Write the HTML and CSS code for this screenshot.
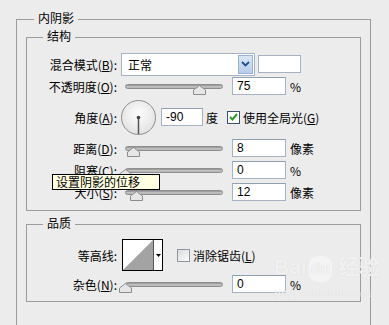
FILE: index.html
```html
<!DOCTYPE html>
<html lang="zh-CN">
<head>
    <meta charset="UTF-8">
    <title>内阴影</title>
    <link rel="stylesheet" href="styles.css">
</head>
<body>

<div class="panel">
    <div class="legend legend-outer">内阴影</div>

    <!-- 结构 -->
    <div class="group group-structure">
        <div class="legend">结构</div>

        <div class="row row-blend">
            <div class="label">混合模式(<u>B</u>):</div>
            <div class="select">
                <span>正常</span>
                <span class="select-btn">
                    <svg width="9" height="6" viewBox="0 0 9 6"><path d="M1 1 L4.5 4.5 L8 1" fill="none" stroke="#1f4f8f" stroke-width="1.8"/></svg>
                </span>
            </div>
            <div class="swatch"></div>
        </div>

        <div class="row row-slider">
            <div class="label">不透明度(<u>O</u>):</div>
            <div class="slider">
                <div class="track"></div>
                <svg class="thumb" style="left: 68px" width="13" height="10" viewBox="0 0 13 10"><polygon points="0.5,9.5 0.5,5 6.5,0.5 12.5,5 12.5,9.5" fill="#e6e6e6" stroke="#8c8c8c"/></svg>
            </div>
            <input class="num" type="text" value="75">
            <span class="unit">%</span>
        </div>

        <div class="row row-angle">
            <div class="label">角度(<u>A</u>):</div>
            <svg class="dial" width="35" height="35" viewBox="0 0 35 35">
                <defs>
                    <radialGradient id="dg" cx="50%" cy="40%" r="60%">
                        <stop offset="0" stop-color="#fdfdfd"/>
                        <stop offset="1" stop-color="#e2e2e2"/>
                    </radialGradient>
                </defs>
                <circle cx="17.5" cy="17.5" r="17" fill="url(#dg)" stroke="#8d8d8d"/>
                <line x1="17.5" y1="17.5" x2="17.5" y2="34" stroke="#555" stroke-width="1.5"/>
                <circle cx="17.5" cy="17.5" r="1.8" fill="#444"/>
            </svg>
            <input class="num num-angle" type="text" value="-90">
            <span class="unit-deg">度</span>
            <span class="check checked">
                <svg width="9" height="8" viewBox="0 0 9 8"><path d="M1 4 L3.5 6.5 L8 1" fill="none" stroke="#2e9a2e" stroke-width="2"/></svg>
            </span>
            <span class="check-text">使用全局光(<u>G</u>)</span>
        </div>

        <div class="row row-slider row-small">
            <div class="label">距离(<u>D</u>):</div>
            <div class="slider">
                <div class="track"></div>
                <svg class="thumb" style="left: 2px" width="13" height="10" viewBox="0 0 13 10"><polygon points="0.5,9.5 0.5,5 6.5,0.5 12.5,5 12.5,9.5" fill="#e6e6e6" stroke="#8c8c8c"/></svg>
            </div>
            <input class="num" type="text" value="8">
            <span class="unit">像素</span>
        </div>

        <div class="row row-slider row-small">
            <div class="label">阻塞(<u>C</u>):</div>
            <div class="slider">
                <div class="track"></div>
                <svg class="thumb" style="left: -6px" width="13" height="10" viewBox="0 0 13 10"><polygon points="0.5,9.5 0.5,5 6.5,0.5 12.5,5 12.5,9.5" fill="#e6e6e6" stroke="#8c8c8c"/></svg>
            </div>
            <input class="num" type="text" value="0">
            <span class="unit">%</span>
        </div>

        <div class="row row-slider row-small">
            <div class="label">大小(<u>S</u>):</div>
            <div class="slider">
                <div class="track"></div>
                <svg class="thumb" style="left: 5px" width="13" height="10" viewBox="0 0 13 10"><polygon points="0.5,9.5 0.5,5 6.5,0.5 12.5,5 12.5,9.5" fill="#e6e6e6" stroke="#8c8c8c"/></svg>
            </div>
            <input class="num" type="text" value="12">
            <span class="unit">像素</span>
        </div>
    </div>

    <!-- 品质 -->
    <div class="group group-quality">
        <div class="legend">品质</div>

        <div class="row row-contour">
            <div class="label">等高线:</div>
            <div class="contour">
                <svg class="contour-curve" width="30" height="30" viewBox="0 0 30 30">
                    <rect width="30" height="30" fill="#fff"/>
                    <polygon points="0,30 30,0 30,30" fill="#a3a3a3"/>
                </svg>
                <span class="contour-btn">
                    <svg width="5" height="3" viewBox="0 0 5 3"><polygon points="0,0 5,0 2.5,3" fill="#000"/></svg>
                </span>
            </div>
            <span class="check"></span>
            <span class="check-text">消除锯齿(<u>L</u>)</span>
        </div>

        <div class="row row-slider">
            <div class="label">杂色(<u>N</u>):</div>
            <div class="slider">
                <div class="track"></div>
                <svg class="thumb" style="left: -6px" width="13" height="10" viewBox="0 0 13 10"><polygon points="0.5,9.5 0.5,5 6.5,0.5 12.5,5 12.5,9.5" fill="#e6e6e6" stroke="#8c8c8c"/></svg>
            </div>
            <input class="num" type="text" value="0">
            <span class="unit">%</span>
        </div>
    </div>
</div>

<!-- tooltip over the sliders -->
<div class="tooltip">设置阴影的位移</div>

<!-- watermark -->
<div class="watermark">
    <div class="wm-logo">Bai<span class="wm-du">du</span> 经验</div>
    <div class="wm-url">jingyan.baidu.com</div>
</div>

</body>
</html>
```

FILE: styles.css
```css
body {
    margin: 0;
    padding: 0;
    background: #ececec;
    color: #000;
    font-family: "Noto Sans CJK SC", "Liberation Sans", sans-serif;
    font-size: 12px;
    height: 325px;
    overflow: hidden;
}

u {
    text-decoration: underline;
    text-underline-offset: 1px;
}

.panel {
    box-sizing: border-box;
    margin: 19px 0 0 16px;
    width: 355px;
    height: 306px;
    border: 1px solid #9c9c9c;
    border-bottom: none;
}

.legend {
    width: max-content;
    height: 16px;
    line-height: 16px;
    margin: -10px 0 0 16px;
    padding: 0 4px;
    background: #ececec;
}

.legend-outer {
    margin-left: 17px;
}

.group {
    box-sizing: border-box;
    width: 335px;
    margin-left: 9px;
    border: 1px solid #9c9c9c;
}

.group-structure {
    margin-top: 11px;
    height: 174px;
}

.group-quality {
    margin-top: 13px;
    height: 78px;
}

.row {
    display: flex;
    align-items: center;
}

.label {
    flex: none;
    width: 90px;
    text-align: right;
    white-space: nowrap;
}

/* blend mode */
.row-blend {
    margin-top: 8px;
    height: 24px;
}

.select {
    box-sizing: border-box;
    display: flex;
    align-items: center;
    justify-content: space-between;
    width: 134px;
    height: 23px;
    margin-left: 4px;
    padding: 1px 1px 1px 6px;
    background: #fff;
    border: 1px solid #a6b3c4;
}

.select-btn {
    box-sizing: border-box;
    display: flex;
    align-items: center;
    justify-content: center;
    width: 15px;
    height: 19px;
    background: linear-gradient(#dbe7f6, #b7cdea);
    border: 1px solid #98b3d8;
}

.swatch {
    box-sizing: border-box;
    width: 43px;
    height: 18px;
    margin-left: 3px;
    background: #fff;
    border: 1px solid #a6b3c4;
}

/* sliders */
.row-slider {
    height: 20px;
}

.row-small {
    height: 22px;
}

.row-angle + .row-small {
    margin-top: 3px;
}

.slider {
    position: relative;
    flex: none;
    width: 98px;
    height: 11px;
    margin: 7px 0 0 8px;
}

.track {
    box-sizing: border-box;
    height: 5px;
    border-radius: 3px;
    background: linear-gradient(#8f8f8f, #c8c8c8 60%, #b0b0b0);
    border: 1px solid #8d8d8d;
}

.thumb {
    position: absolute;
    top: 1px;
}

.num {
    box-sizing: border-box;
    width: 54px;
    height: 18px;
    margin: 0 0 0 9px;
    padding: 0 4px;
    background: #fff;
    border: 1px solid #a6b3c4;
    border-top-color: #8fa0b5;
    font-family: "Liberation Sans", sans-serif;
    font-size: 12px;
    color: #000;
    outline: none;
}

.unit {
    margin-left: 4px;
    white-space: nowrap;
}

/* angle */
.row-angle {
    margin-top: 4px;
    height: 34px;
}

.dial {
    flex: none;
    margin-left: 4px;
}

.num-angle {
    width: 42px;
    margin-left: 5px;
}

.unit-deg {
    margin-left: 3px;
}

.check {
    box-sizing: border-box;
    display: flex;
    align-items: center;
    justify-content: center;
    flex: none;
    width: 13px;
    height: 13px;
    margin-left: 14px;
    background: linear-gradient(135deg, #dcdcdc, #fbfbfb);
    border: 1px solid #8c97a3;
}

.check.checked {
    margin-left: 9px;
    background: #fff;
    border-color: #39506b;
}

.check-text {
    margin-left: 3px;
    white-space: nowrap;
}

/* contour */
.row-contour {
    margin-top: 8px;
    height: 32px;
}

.contour {
    box-sizing: border-box;
    display: flex;
    width: 41px;
    height: 32px;
    margin-left: 5px;
    border: 1px solid #000;
    background: #fff;
}

.contour-curve {
    display: block;
    border-right: 1px solid #555;
}

.contour-btn {
    display: flex;
    align-items: center;
    justify-content: center;
    flex: 1;
}

.row-contour + .row-slider {
    margin-top: 3px;
}

/* tooltip */
.tooltip {
    position: absolute;
    left: 52px;
    top: 174px;
    box-sizing: border-box;
    width: 108px;
    height: 16px;
    line-height: 14px;
    padding-left: 3px;
    background: #ffffe1;
    border: 1px solid #000;
    white-space: nowrap;
}

/* watermark */
.watermark {
    position: absolute;
    left: 274px;
    top: 254px;
    color: rgba(255, 255, 255, 0.7);
    text-shadow: 0 0 1px #d0d0d0;
    pointer-events: none;
}

.wm-logo {
    font-family: "Liberation Sans", "Noto Sans CJK SC", sans-serif;
    font-size: 21px;
    font-weight: bold;
    line-height: 26px;
}

.wm-du {
    display: inline-block;
    padding: 0 2px;
    margin-left: 2px;
    border-radius: 9px;
    background: rgba(255, 255, 255, 0.45);
    font-size: 16px;
}

.wm-url {
    font-family: "Liberation Serif", serif;
    font-size: 13px;
    line-height: 18px;
    margin-top: 2px;
}
```
